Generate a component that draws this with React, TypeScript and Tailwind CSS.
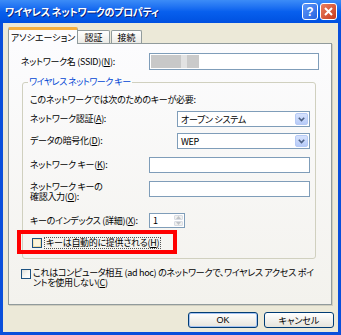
import React from "react";

const F = "font-['Noto_Sans_CJK_JP',sans-serif] [font-feature-settings:'palt']";

function U({ c }: { c: string }) {
  return <span className="underline underline-offset-1">{c}</span>;
}

function Chevron() {
  return (
    <svg width="7" height="5" viewBox="0 0 7 5">
      <path d="M0.8 0.8 L3.5 3.6 L6.2 0.8" fill="none" stroke="#4D6185" strokeWidth="1.6" />
    </svg>
  );
}

function Select({ value }: { value: string }) {
  return (
    <div className="w-[133px] h-[16px] border border-[#7F9DB9] bg-white flex items-center pl-[3px] pr-px">
      <span className="flex-1 text-[9px] leading-none text-black">{value}</span>
      <div className="w-[13px] h-[12px] rounded-[2px] border border-[#B6CAF5] bg-gradient-to-b from-[#D6E2FD] to-[#B7CBF8] flex items-center justify-center">
        <Chevron />
      </div>
    </div>
  );
}

function Input({ w, h = 16 }: { w: number; h?: number }) {
  return <div className="border border-[#7F9DB9] bg-white" style={{ width: w, height: h }} />;
}

function Checkbox({ tint }: { tint?: boolean }) {
  return (
    <div
      className={
        "w-[10px] h-[10px] border border-[#1C5180] shrink-0 " +
        (tint ? "bg-gradient-to-br from-[#F8E9B8] to-[#F0D99A]" : "bg-gradient-to-br from-[#DCDCD7] via-[#F5F5F2] to-white")
      }
    >
      {tint ? <div className="m-[1px] w-[6px] h-[6px] bg-[#FCF5DC]" /> : null}
    </div>
  );
}

export default function App() {
  return (
    <div className={"w-[341px] h-[335px] bg-[#0A4FDB] flex flex-col text-black " + F}>
      {/* title bar */}
      <div className="h-[23px] flex items-center pl-[5px] pr-[4px] bg-gradient-to-b from-[#3C8CF7] via-[#0860EE] to-[#0050E0]">
        <span className="flex-1 text-white font-bold text-[10px] leading-none tracking-[-0.3px] [text-shadow:1px_1px_0_#0A1F7A]">
          ワイヤレス ネットワークのプロパティ
        </span>
        <div className="flex gap-[2px]">
          <div className="w-[16px] h-[17px] rounded-[3px] border border-white bg-gradient-to-br from-[#5E97F8] to-[#2862E0] flex items-center justify-center text-white font-bold text-[12px] leading-none font-['Liberation_Sans',sans-serif]">
            ?
          </div>
          <div className="w-[17px] h-[17px] rounded-[3px] border border-white bg-gradient-to-br from-[#E97E5E] to-[#C7371A] flex items-center justify-center">
            <svg width="9" height="9" viewBox="0 0 9 9">
              <path d="M1 1 L8 8 M8 1 L1 8" stroke="white" strokeWidth="2" />
            </svg>
          </div>
        </div>
      </div>

      {/* body */}
      <div className="flex-1 mx-[3px] mb-[3px] bg-[#ECE9D8] pt-[4px] flex flex-col">
        {/* tabs */}
        <div className="flex items-end pl-[5px] h-[16px] relative z-10">
          <div className="w-[70px] h-[17px] -mb-px bg-[#FCFCFE] border-x border-[#919B9C] border-t-[3px] border-t-[#F5B040] rounded-t-[2px] flex items-center justify-center text-[9px] leading-none">
            アソシエーション
          </div>
          <div className="w-[32px] h-[13px] bg-gradient-to-b from-white to-[#ECEBE6] border-t border-r border-[#919B9C] rounded-tr-[2px] flex items-center justify-center text-[9px] leading-none">
            認証
          </div>
          <div className="ml-px w-[31px] h-[13px] bg-gradient-to-b from-white to-[#ECEBE6] border-t border-x border-[#919B9C] rounded-t-[2px] flex items-center justify-center text-[9px] leading-none">
            接続
          </div>
        </div>

        {/* panel */}
        <div className="relative ml-[5px] w-[324px] h-[262px] border border-[#919B9C] bg-gradient-to-b from-[#FCFCFE] to-[#F3F2ED] shadow-[1px_1px_0_#D0CEBF] text-[9px] leading-[10px] tracking-[-0.3px]">
          {/* SSID */}
          <div className="mt-[9px] pl-[12px] pr-[12px] flex items-center">
            <span className="flex-1">
              ネットワーク名 (SSID)(<U c="N" />):
            </span>
            <div className="w-[170px] h-[17px] border border-[#7F9DB9] bg-white flex items-center pl-px">
              <div className="w-[30px] h-[13px] bg-[#C8C8C8]" />
              <div className="w-[6px] h-[13px] bg-[#E2E2E2]" />
              <div className="w-[12px] h-[13px] bg-[#CACACA]" />
            </div>
          </div>

          {/* group */}
          <div className="relative mt-[12px] ml-[13px] w-[294px] border border-[#D0D0BF] rounded-[3px] pl-[7px] pb-[9px]">
            <div className="absolute -top-[6px] left-[5px] px-[1px] bg-[#FBFBFB] text-[#0046D5] leading-[10px] tracking-[-0.5px]">
              ワイヤレス ネットワーク キー
            </div>
            <div className="pt-[10px] h-[22px] flex items-end">このネットワークでは次のためのキーが必要:</div>

            <div className="mt-[6px] flex items-center pr-[5px] h-[16px]">
              <span className="flex-1">
                ネットワーク認証(<U c="A" />):
              </span>
              <Select value="オープン システム" />
            </div>
            <div className="mt-[6px] flex items-center pr-[5px] h-[16px]">
              <span className="flex-1">
                データの暗号化(<U c="D" />):
              </span>
              <Select value="WEP" />
            </div>
            <div className="mt-[8px] flex items-center pr-[5px] h-[16px]">
              <span className="flex-1">
                ネットワーク キー(<U c="K" />):
              </span>
              <Input w={161} />
            </div>
            <div className="mt-[8px] flex items-start pr-[5px]">
              <span className="flex-1 mt-px">
                ネットワーク キーの
                <br />
                確認入力(<U c="O" />):
              </span>
              <Input w={161} />
            </div>
            <div className="mt-[11px] flex items-center h-[15px]">
              <span className="w-[119px]">
                キーのインデックス (詳細)(<U c="X" />):
              </span>
              <div className="w-[36px] h-[15px] border border-[#7F9DB9] bg-white flex items-stretch">
                <span className="flex-1 pl-[3px] leading-[13px]">1</span>
                <div className="w-[11px] flex flex-col gap-px p-px">
                  <div className="flex-1 rounded-[1px] bg-[#F0F0EE] border border-[#D8DCE4] flex items-center justify-center">
                    <svg width="5" height="3" viewBox="0 0 5 3">
                      <path d="M0 3 L2.5 0 L5 3 Z" fill="#BFC3C8" />
                    </svg>
                  </div>
                  <div className="flex-1 rounded-[1px] bg-[#F0F0EE] border border-[#D8DCE4] flex items-center justify-center">
                    <svg width="5" height="3" viewBox="0 0 5 3">
                      <path d="M0 0 L2.5 3 L5 0 Z" fill="#BFC3C8" />
                    </svg>
                  </div>
                </div>
              </div>
            </div>
            <div className="mt-[9px] ml-[2px] flex items-center h-[12px] gap-[2px]">
              <Checkbox tint />
              <span className="border border-dotted border-[#555] px-px leading-[10px]">
                キーは自動的に提供される(<U c="H" />)
              </span>
            </div>
          </div>

          {/* adhoc */}
          <div className="mt-[9px] pl-[12px] flex items-start gap-[2px]">
            <div className="mt-px">
              <Checkbox />
            </div>
            <span className="leading-[10px]">
              これはコンピュータ相互 (ad hoc) のネットワークで、ワイヤレス アクセス ポイ
              <br />
              ントを使用しない(<U c="C" />)
            </span>
          </div>

          {/* red annotation */}
          <div className="absolute left-[8px] top-[186px] w-[160px] h-[24px] border-[4px] border-[#FF0000]" />
        </div>

        {/* buttons */}
        <div className="mt-[7px] flex justify-end gap-[6px] pr-[4px]">
          <div className="w-[70px] h-[16px] rounded-[3px] border border-[#003C74] bg-gradient-to-b from-white to-[#E6E4DC] shadow-[inset_0_0_0_1px_#A6C3F2] flex items-center justify-center text-[9px] leading-none font-['Liberation_Sans',sans-serif]">
            OK
          </div>
          <div className="w-[70px] h-[16px] rounded-[3px] border border-[#003C74] bg-gradient-to-b from-white to-[#E6E4DC] flex items-center justify-center text-[9px] leading-none">
            キャンセル
          </div>
        </div>
      </div>
    </div>
  );
}
